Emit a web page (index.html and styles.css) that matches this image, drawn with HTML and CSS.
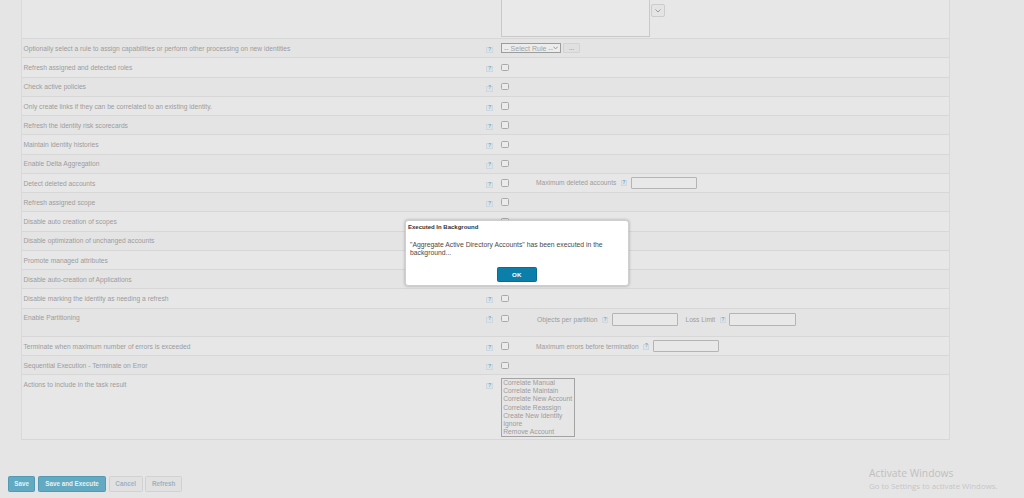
FILE: index.html
```html
<!DOCTYPE html>
<html lang="en">
<head>
<meta charset="utf-8">
<title>Aggregate Active Directory Accounts</title>
<link rel="stylesheet" href="styles.css">
</head>
<body>
<div class="page">
  <div class="form">
    <div class="row row-top">
      <div class="label"></div>
      <div class="help-cell"></div>
      <div class="value value-top">
        <div class="multi">
          <div class="textarea"></div>
          <div class="movers">
            <span class="mover"><svg width="6" height="4" viewBox="0 0 6 4"><path d="M0.5 3.5 L3 1 L5.5 3.5" fill="none" stroke="#9a9a9a" stroke-width="1"/></svg></span>
            <span class="mover"><svg width="6" height="4" viewBox="0 0 6 4"><path d="M0.5 0.5 L3 3 L5.5 0.5" fill="none" stroke="#9a9a9a" stroke-width="1"/></svg></span>
          </div>
        </div>
      </div>
    </div>

    <div class="row">
      <div class="label">Optionally select a rule to assign capabilities or perform other processing on new identities</div>
      <div class="help-cell"><span class="help">?</span></div>
      <div class="value">
        <div class="select"><span>-- Select Rule --</span><svg width="6" height="4" viewBox="0 0 6 4"><path d="M0.5 0.5 L3 3 L5.5 0.5" fill="none" stroke="#8a8a8a" stroke-width="1"/></svg></div>
        <span class="dots">...</span>
      </div>
    </div>

    <div class="row"><div class="label">Refresh assigned and detected roles</div><div class="help-cell"><span class="help">?</span></div><div class="value"><span class="cb"></span></div></div>
    <div class="row"><div class="label">Check active policies</div><div class="help-cell"><span class="help">?</span></div><div class="value"><span class="cb"></span></div></div>
    <div class="row"><div class="label">Only create links if they can be correlated to an existing identity.</div><div class="help-cell"><span class="help">?</span></div><div class="value"><span class="cb"></span></div></div>
    <div class="row"><div class="label">Refresh the identity risk scorecards</div><div class="help-cell"><span class="help">?</span></div><div class="value"><span class="cb"></span></div></div>
    <div class="row"><div class="label">Maintain identity histories</div><div class="help-cell"><span class="help">?</span></div><div class="value"><span class="cb"></span></div></div>
    <div class="row"><div class="label">Enable Delta Aggregation</div><div class="help-cell"><span class="help">?</span></div><div class="value"><span class="cb"></span></div></div>
    <div class="row">
      <div class="label">Detect deleted accounts</div>
      <div class="help-cell"><span class="help">?</span></div>
      <div class="value">
        <span class="cb"></span>
        <span class="field-label first">Maximum deleted accounts</span><span class="help inline">?</span><span class="inp"></span>
      </div>
    </div>
    <div class="row"><div class="label">Refresh assigned scope</div><div class="help-cell"><span class="help">?</span></div><div class="value"><span class="cb"></span></div></div>
    <div class="row"><div class="label">Disable auto creation of scopes</div><div class="help-cell"><span class="help">?</span></div><div class="value"><span class="cb"></span></div></div>
    <div class="row"><div class="label">Disable optimization of unchanged accounts</div><div class="help-cell"><span class="help">?</span></div><div class="value"><span class="cb"></span></div></div>
    <div class="row"><div class="label">Promote managed attributes</div><div class="help-cell"><span class="help">?</span></div><div class="value"><span class="cb"></span></div></div>
    <div class="row"><div class="label">Disable auto-creation of Applications</div><div class="help-cell"><span class="help">?</span></div><div class="value"><span class="cb"></span></div></div>
    <div class="row"><div class="label">Disable marking the identity as needing a refresh</div><div class="help-cell"><span class="help">?</span></div><div class="value"><span class="cb"></span></div></div>
    <div class="row row-partition">
      <div class="label">Enable Partitioning</div>
      <div class="help-cell"><span class="help">?</span></div>
      <div class="value">
        <span class="cb"></span>
        <span class="field-label first part">Objects per partition</span><span class="help inline">?</span><span class="inp"></span>
        <span class="field-label second">Loss Limit</span><span class="help inline">?</span><span class="inp"></span>
      </div>
    </div>
    <div class="row">
      <div class="label">Terminate when maximum number of errors is exceeded</div>
      <div class="help-cell"><span class="help">?</span></div>
      <div class="value">
        <span class="cb"></span>
        <span class="field-label first">Maximum errors before termination</span><span class="help inline">?</span><span class="inp"></span>
      </div>
    </div>
    <div class="row"><div class="label">Sequential Execution - Terminate on Error</div><div class="help-cell"><span class="help">?</span></div><div class="value"><span class="cb"></span></div></div>
    <div class="row row-actions">
      <div class="label">Actions to include in the task result</div>
      <div class="help-cell"><span class="help">?</span></div>
      <div class="value value-list">
        <ul class="listbox">
          <li>Correlate Manual</li>
          <li>Correlate Maintain</li>
          <li>Correlate New Account</li>
          <li>Correlate Reassign</li>
          <li>Create New Identity</li>
          <li>Ignore</li>
          <li>Remove Account</li>
        </ul>
      </div>
    </div>
  </div>

  <div class="actions">
    <button class="btn primary">Save</button>
    <button class="btn primary">Save and Execute</button>
    <button class="btn secondary">Cancel</button>
    <button class="btn secondary">Refresh</button>
  </div>
</div>

<div class="dialog">
  <div class="dialog-title">Executed In Background</div>
  <div class="dialog-msg">"Aggregate Active Directory Accounts" has been executed in the background...</div>
  <div class="dialog-foot"><button class="ok">OK</button></div>
</div>

<div class="watermark">
  <div class="wm-title">Activate Windows</div>
  <div class="wm-sub">Go to Settings to activate Windows.</div>
</div>
</body>
</html>
```

FILE: styles.css
```css
* { box-sizing: border-box; margin: 0; padding: 0; }
html, body { height: 100%; }
body {
  background: #e5e5e5;
  font-family: "Liberation Sans", Arial, sans-serif;
  color: #9c9c9c;
  overflow: hidden;
}
.page {
  display: flex;
  flex-direction: column;
  height: 498px;
}
.form {
  margin-left: 21px;
  width: 929px;
  border-left: 1px solid #d9d9d9;
  border-right: 1px solid #d9d9d9;
}
.row {
  display: grid;
  grid-template-columns: 459px 16px 1fr;
  height: 19.25px;
  border-bottom: 1px solid #d7d7d7;
  background: #e7e7e7;
}
.row:nth-child(even) { background: #e4e4e4; }
.row-top { height: 39px; overflow: hidden; }
.row-partition { height: 28.4px; }
.row-actions { height: 64.5px; }

.label {
  font-size: 6.7px;
  line-height: 9px;
  padding: 4.8px 0 0 1.5px;
  white-space: nowrap;
}
.help-cell { padding: 8px 0 0 5px; }
.help {
  display: flex;
  align-items: center;
  justify-content: center;
  width: 7px;
  height: 6px;
  background: #dde4e8;
  border: 1px solid #d0d8dd;
  color: #6da4c6;
  font-size: 4.5px;
  font-weight: bold;
  line-height: 1;
}
.help.inline { width: 6px; margin-left: 4.7px; margin-top: 1px; }

.value {
  display: flex;
  align-items: center;
  height: 18.25px;
  padding-left: 4px;
}
.value-top {
  height: 38px;
  align-items: flex-start;
}
.multi {
  display: flex;
  align-items: flex-start;
  margin-top: -13.3px;
}
.textarea {
  width: 149px;
  height: 50px;
  border: 1px solid #c9c9c9;
  background: #e9e9e9;
}
.movers {
  display: flex;
  flex-direction: column;
  gap: 4px;
  margin-left: 1.3px;
}
.mover {
  display: flex;
  align-items: center;
  justify-content: center;
  width: 14px;
  height: 13.4px;
  border: 1px solid #cccccc;
  border-radius: 2px;
  background: #e4e4e4;
}

.select {
  display: flex;
  align-items: center;
  justify-content: space-between;
  width: 59.7px;
  height: 9.7px;
  border: 1px solid #9c9c9c;
  background: #ececec;
  font-size: 7px;
  color: #a2a2a2;
  padding: 0 1.5px 0 2px;
  white-space: nowrap;
}
.dots {
  display: flex;
  align-items: center;
  justify-content: center;
  margin-left: 2.6px;
  width: 16.7px;
  height: 9.7px;
  border: 1px solid #d3d3d3;
  border-radius: 1px;
  background: #e0e0e0;
  color: #8fa6b6;
  font-size: 6px;
  font-weight: bold;
  line-height: 1;
  padding-bottom: 1px;
}

.cb {
  width: 7.5px;
  height: 7.5px;
  border: 1px solid #a9a9a9;
  border-radius: 1.5px;
  background: #ebebeb;
}
.field-label {
  font-size: 6.6px;
  white-space: nowrap;
  color: #9c9c9c;
}
.field-label.first { margin-left: 27.5px; }
.field-label.first.part { margin-left: 28.5px; font-size: 6.75px; }
.field-label.second { margin-left: 7.3px; }
.inp {
  width: 66.5px;
  height: 12.5px;
  margin-left: 3.6px;
  border: 1px solid #b4b4b4;
  border-radius: 1px;
  background: #e8e8e8;
}
.row-partition .value { padding-top: 1.5px; height: 20px; }
.row-partition .cb { margin-top: -2px; }

.value-list {
  align-items: flex-start;
  height: auto;
  padding-top: 2.7px;
}
.listbox {
  list-style: none;
  width: 74.3px;
  height: 59px;
  border: 1px solid #a3a3a3;
  border-right-width: 1.5px;
  background: #e6e6e6;
  font-size: 6.75px;
  line-height: 8.2px;
  padding: 0 0 0 1.2px;
  color: #9c9c9c;
  white-space: nowrap;
  overflow: hidden;
}

.actions {
  display: flex;
  gap: 3px;
  padding: 36px 0 0 7.7px;
}
.btn {
  height: 15.7px;
  padding: 0 5.5px;
  font-family: "Liberation Sans", Arial, sans-serif;
  font-size: 6.3px;
  font-weight: bold;
  border-radius: 1.5px;
  line-height: 1;
}
.btn.primary {
  background: #62a9c2;
  border: 1px solid #5399b3;
  color: #e5f1f5;
}
.btn.primary + .btn.primary { padding: 0 5.8px; }
.btn.secondary {
  background: #e1e1e1;
  border: 1px solid #d1d1d1;
  color: #9ab3c3;
  padding: 0 5.8px;
}
.btn.secondary + .btn.secondary { margin-left: -0.6px; }

.dialog {
  position: absolute;
  left: 404.5px;
  top: 220px;
  width: 224.5px;
  height: 66px;
  background: #ffffff;
  border: 1px solid #cfcfcf;
  border-radius: 3px;
  box-shadow: 0 0 3px rgba(0, 0, 0, 0.3);
  color: #444;
}
.dialog-title {
  font-size: 6px;
  font-weight: bold;
  color: #333;
  padding: 2px 0 0 2.5px;
  line-height: 9px;
}
.dialog-msg {
  font-size: 6.8px;
  line-height: 8.3px;
  padding: 8.8px 12px 0 4.5px;
  color: #4a4a4a;
}
.dialog-foot {
  display: flex;
  justify-content: center;
  padding-top: 9.5px;
}
.ok {
  width: 40.5px;
  height: 15px;
  background: #0c7eaa;
  border: 1px solid #0a6c93;
  border-radius: 1.5px;
  color: #ffffff;
  font-family: "Liberation Sans", Arial, sans-serif;
  font-size: 6.2px;
  font-weight: bold;
}

.watermark {
  position: absolute;
  left: 869px;
  top: 467px;
  font-family: "Open Sans", "Noto Sans", sans-serif;
  color: #c0c0c0;
}
.wm-title { font-size: 10.3px; line-height: 13px; }
.wm-sub { font-size: 7.85px; line-height: 12px; color: #c6c6c6; }
```
